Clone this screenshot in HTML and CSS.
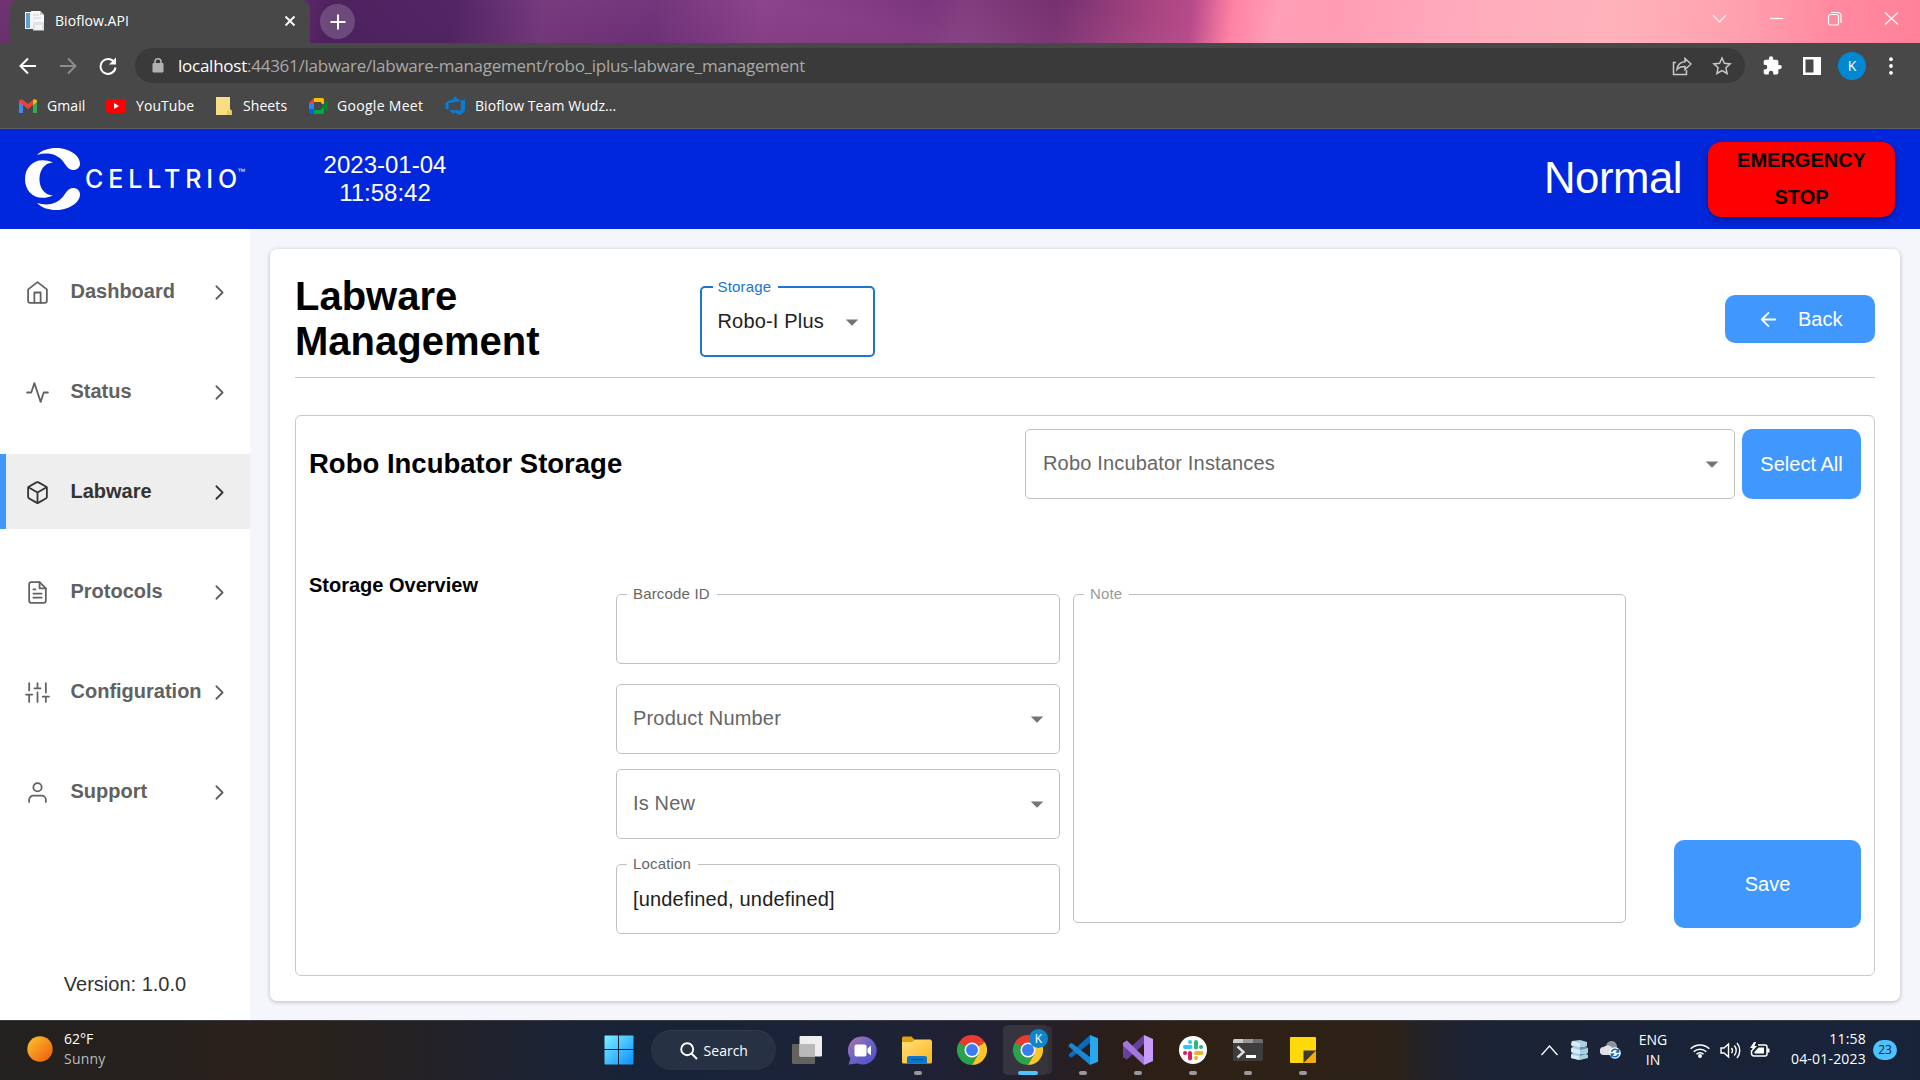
FILE: index.html
```html
<!DOCTYPE html>
<html lang="en">
<head>
<meta charset="utf-8">
<title>Bioflow.API</title>
<link rel="stylesheet" href="styles.css">
</head>
<body>
<svg class="defs" width="0" height="0" aria-hidden="true">
  <defs>
    <linearGradient id="gWin" x1="0" y1="0" x2="1" y2="1"><stop offset="0" stop-color="#7df0ff"/><stop offset="1" stop-color="#0a8fff"/></linearGradient>
    <linearGradient id="gSun" x1="0" y1="0" x2="1" y2="1"><stop offset="0" stop-color="#fbc62f"/><stop offset="1" stop-color="#f0560c"/></linearGradient>
    <linearGradient id="gChat" x1="0" y1="0" x2="1" y2="1"><stop offset="0" stop-color="#b074a8"/><stop offset=".5" stop-color="#6a63c8"/><stop offset="1" stop-color="#4a4fc4"/></linearGradient>
    <linearGradient id="gFold" x1="0" y1="0" x2="1" y2="1"><stop offset="0" stop-color="#ffe07a"/><stop offset="1" stop-color="#ffb51c"/></linearGradient>
    <symbol id="chev" viewBox="0 0 24 24"><path d="M9 18l6-6-6-6"/></symbol>
    <symbol id="drop" viewBox="0 0 24 24"><path d="M7 10l5 5 5-5z"/></symbol>
    <symbol id="chrome" viewBox="0 0 30 30">
      <path d="M15 15L2 7.500A15 15 0 0 1 28 7.500z" fill="#ea3a2f"/>
      <path d="M2 7.500A15 15 0 0 0 15 30L21.500 18.700 15 15z" fill="#2ba24c"/>
      <path d="M28 7.500A15 15 0 0 1 15 30L21.500 18.700 21 7.500z" fill="#fdc52a"/>
      <path d="M15 7.500h13L15 15 8.500 18.700 2 7.500z" fill="#ea3a2f"/>
      <path d="M2 7.500L8.500 18.800 15 15z" fill="#2ba24c"/>
      <circle cx="15" cy="15" r="7.500" fill="#fff"/><circle cx="15" cy="15" r="6" fill="#3b7cf0"/>
    </symbol>
  </defs>
</svg>

<div class="tabstrip">
  <div class="tab">
    <svg class="favicon" width="20" height="20" viewBox="0 0 20 20"><path d="M0 1h12v17H0z" fill="#eef3f7"/><path d="M1 2h4v15H1z" fill="#5d9fcf"/><path d="M6 0h9l4 4v10H6z" fill="#f7f7f7"/><path d="M15 0v4h4z" fill="#c8ccd0"/><path d="M8 4h6M8 7h8" stroke="#cfd4d8"/><path d="M8 11h11v8.500H8z" fill="#dfe2e5"/><path d="M10 14h7v5h-7z" fill="#f4f4f4"/></svg>
    <span class="tab-title">Bioflow.API</span>
    <svg width="12" height="12" viewBox="0 0 12 12" stroke="#fff" stroke-width="1.800"><path d="M1.500 1.500l9 9M10.500 1.500l-9 9"/></svg>
  </div>
  <div class="newtab"><svg width="16" height="16" viewBox="0 0 16 16" stroke="#fff" stroke-width="2"><path d="M8 .500v15M.500 8h15"/></svg></div>
  <div class="winctl">
    <svg width="15" height="15" viewBox="0 0 15 15"><path d="M1 4l6.500 7L14 4" opacity=".8"/></svg>
    <svg width="15" height="15" viewBox="0 0 15 15"><path d="M1 7.500h13"/></svg>
    <svg width="15" height="15" viewBox="0 0 15 15"><rect x="1.500" y="3.500" width="10" height="10.500" rx="2"/><path d="M4 1.500h7a3 3 0 0 1 3 3V12"/></svg>
    <svg width="15" height="15" viewBox="0 0 15 15"><path d="M1 1.500l13 12M14 1.500l-13 12"/></svg>
  </div>
</div>

<div class="toolbar">
  <svg width="18" height="18" viewBox="0 0 18 18" class="ln w"><path d="M17 9H2M9 1.500L1.500 9 9 16.500"/></svg>
  <svg width="18" height="18" viewBox="0 0 18 18" class="ln g"><path d="M1 9h15M9 1.500L16.500 9 9 16.500"/></svg>
  <svg width="18" height="18" viewBox="0 0 18 18" class="ln w"><path d="M15.500 5.500A7.500 7.500 0 1 0 16.500 10.500"/><path d="M17 .500v7h-7z" fill="#fff" stroke="none"/></svg>
  <div class="omnibox">
    <svg width="12" height="15" viewBox="0 0 12 15"><rect x=".500" y="5" width="11" height="9.500" rx="1.200" fill="#b0b3b6"/><path d="M3 6V3.800a3 3 0 0 1 6 0V6" fill="none" stroke="#b0b3b6" stroke-width="1.600"/></svg>
    <div class="url"><b>localhost</b>:44361/labware/labware-management/robo_iplus-labware_management</div>
    <svg width="20" height="20" viewBox="0 0 20 20" class="thin"><path d="M4 6.500H1.500v12h13V14M5 13.500c.500-5 3.500-7.500 8-7.800V2.500L19 8l-6 5.500v-3c-3.500 0-6 .800-8 3z"/></svg>
    <svg width="20" height="20" viewBox="0 0 20 20" class="thin"><path d="M10 2l2.400 5.300 5.800.600-4.300 3.900 1.200 5.700L10 14.600l-5.100 2.900 1.200-5.700L1.800 7.900l5.800-.600z"/></svg>
  </div>
  <svg class="ext" width="24" height="24" viewBox="0 0 24 24"><path fill="#fff" d="M20.500 11H19V7c0-1.100-.9-2-2-2h-4V3.500a2.500 2.500 0 0 0-5 0V5H4c-1.100 0-2 .9-2 2v3.800h1.500a2.700 2.700 0 0 1 0 5.400H2V20c0 1.100.9 2 2 2h3.800v-1.500a2.700 2.700 0 0 1 5.400 0V22H17c1.100 0 2-.9 2-2v-4h1.500a2.500 2.500 0 0 0 0-5z" transform="translate(2 1.500) scale(.86)"/></svg>
  <svg class="side" width="18" height="18" viewBox="0 0 18 18"><path d="M0 0h18v18H0zM2.500 2.500v13h8v-13z" fill="#fff" fill-rule="evenodd"/></svg>
  <div class="avatar">K</div>
  <svg class="dots" width="4" height="18" viewBox="0 0 4 18" fill="#fff"><circle cx="2" cy="2.200" r="1.900"/><circle cx="2" cy="9" r="1.900"/><circle cx="2" cy="15.800" r="1.900"/></svg>
</div>

<div class="bookmarks">
  <div class="bm bm1"><svg width="18" height="14" viewBox="0 0 18 14"><path d="M0 2v12h4V5z" fill="#4285f4"/><path d="M18 2v12h-4V5z" fill="#34a853"/><path d="M0 2.500C0 .500 2.500-.500 4 1l5 4 5-4v5l-5 4-5-4-4-3z" fill="#ea4335"/><path d="M14 1c1.500-1.500 4-.500 4 1.500V3l-4 3z" fill="#fbbc04"/></svg><span>Gmail</span></div>
  <div class="bm bm2"><svg width="20" height="14" viewBox="0 0 20 14"><rect width="20" height="14" rx="3.500" fill="#f00"/><path d="M8 4v6l5-3z" fill="#fff"/></svg><span>YouTube</span></div>
  <div class="bm bm3"><svg width="16" height="18" viewBox="0 0 16 18"><path d="M0 0h14v12l2 2v4H0z" fill="#f8dd85"/><path d="M11 13l5 1v4h-5z" fill="#e9c865"/></svg><span>Sheets</span></div>
  <div class="bm bm4"><svg width="19" height="16" viewBox="0 0 19 16"><path d="M5 4h7v8H5z" fill="#484848"/><path d="M5 0h8.500Q15 0 15 1.500V7l-3-2V4H5z" fill="#fbbc04"/><path d="M5 0v5H0z" fill="#ea4335"/><path d="M0 5h5v7H0z" fill="#2684fc"/><path d="M0 11h5v5H1.500L0 14.500z" fill="#0066da"/><path d="M5 12h7v-1l3-2v5.500Q15 16 13.500 16H5z" fill="#00ac47"/><path d="M12 8l6-5.200q1-.500 1 .500v9.400q0 1-1 .500z" fill="#00832d"/></svg><span>Google Meet</span></div>
  <div class="bm bm5"><svg width="20" height="19" viewBox="0 0 20 19"><path d="M20 3.500v11.300L15.500 19l-7-2.700v2.600L4.300 13.700l11.500.900V4.800zM15.900 4.900L9 0v3L2.700 5 .5 7.500v5l3 1.300V7.200z" fill="#0b7bd8"/></svg><span>Bioflow Team Wudz...</span></div>
</div>

<header class="header">
  <div class="logo">
    <svg width="55" height="62" viewBox="25 148 55 62" fill="#fff"><path d="M37 155C42 150 49 148 56 148C69 148 80 155.500 80 163.500C80 167.500 77 170 73 170C68.500 170 66.500 166 63.500 162C57 153.500 47 152 37 155z"/><path d="M53 162.500C37 155.500 25 165 25 179C25 193 37 202.500 53 195.500C35 195 35 163 53 162.500z"/><path d="M37 203C42 208 49 210 56 210C69 210 80 202.500 80 194.500C80 190.500 77 188 73 188C68.500 188 66.500 192 63.500 196C57 204.500 47 206 37 203z"/></svg>
    <div class="brand">CELLTRI<span>O</span></div><span class="tm">™</span>
  </div>
  <div class="clock">2023-01-04<br>11:58:42</div>
  <div class="mode">Normal</div>
  <div class="estop">EMERGENCY<br>STOP</div>
</header>

<div class="app">
  <nav class="sidebar">
    <a class="nav"><svg class="ni" viewBox="0 0 24 24"><path d="M3 9l9-7 9 7v11a2 2 0 0 1-2 2H5a2 2 0 0 1-2-2z"/><path d="M9 22V12h6v10"/></svg><span>Dashboard</span><svg class="ch"><use href="#chev"/></svg></a>
    <a class="nav"><svg class="ni" viewBox="0 0 24 24"><path d="M22 12h-4l-3 9L9 3l-3 9H2"/></svg><span>Status</span><svg class="ch"><use href="#chev"/></svg></a>
    <a class="nav active"><svg class="ni" viewBox="0 0 24 24"><path d="M21 16V8a2 2 0 0 0-1-1.730l-7-4a2 2 0 0 0-2 0l-7 4A2 2 0 0 0 3 8v8a2 2 0 0 0 1 1.730l7 4a2 2 0 0 0 2 0l7-4A2 2 0 0 0 21 16z"/><path d="M3.270 6.960L12 12.010l8.730-5.050M12 22.080V12"/></svg><span>Labware</span><svg class="ch"><use href="#chev"/></svg></a>
    <a class="nav"><svg class="ni" viewBox="0 0 24 24"><path d="M14 2H6a2 2 0 0 0-2 2v16a2 2 0 0 0 2 2h12a2 2 0 0 0 2-2V8z"/><path d="M14 2v6h6M16 13H8M16 17H8M10 9H8"/></svg><span>Protocols</span><svg class="ch"><use href="#chev"/></svg></a>
    <a class="nav"><svg class="ni" viewBox="0 0 24 24"><path d="M4 21v-7M4 10V3M12 21v-9M12 8V3M20 21v-5M20 12V3M1 14h6M9 8h6M17 16h6"/></svg><span>Configuration</span><svg class="ch"><use href="#chev"/></svg></a>
    <a class="nav"><svg class="ni" viewBox="0 0 24 24"><path d="M20 21v-2a4 4 0 0 0-4-4H8a4 4 0 0 0-4 4v2"/><circle cx="12" cy="7" r="4"/></svg><span>Support</span><svg class="ch"><use href="#chev"/></svg></a>
    <div class="version">Version: 1.0.0</div>
  </nav>

  <main class="card">
    <div class="card-head">
      <h1>Labware Management</h1>
      <div class="field focus"><label>Storage</label><span>Robo-I Plus</span><svg class="dd"><use href="#drop"/></svg></div>
      <button class="btn back"><svg width="23" height="23" viewBox="0 0 24 24"><path d="M19 12H5M12 19l-7-7 7-7"/></svg>Back</button>
    </div>
    <section class="panel">
      <div class="row-top">
        <h2>Robo Incubator Storage</h2>
        <div class="field ph instances"><span>Robo Incubator Instances</span><svg class="dd"><use href="#drop"/></svg></div>
        <button class="btn all">Select All</button>
      </div>
      <div class="row-form">
        <h3>Storage Overview</h3>
        <div class="fields">
          <div class="field f1"><label>Barcode ID</label></div>
          <div class="field ph f2"><span>Product Number</span><svg class="dd"><use href="#drop"/></svg></div>
          <div class="field ph f3"><span>Is New</span><svg class="dd"><use href="#drop"/></svg></div>
          <div class="field f4"><label>Location</label><span>[undefined, undefined]</span></div>
        </div>
        <div class="field note"><label>Note</label></div>
        <button class="btn save">Save</button>
      </div>
    </section>
  </main>
</div>

<footer class="taskbar">
  <div class="weather">
    <svg width="26" height="26" viewBox="0 0 26 26"><circle cx="13" cy="13" r="12.700" fill="url(#gSun)"/></svg>
    <div><div class="deg">62°F</div><div class="sky">Sunny</div></div>
  </div>
  <div class="dock">
    <div class="slot"><svg width="30" height="30" viewBox="0 0 30 30" fill="url(#gWin)"><path d="M1 .500h13v13.500H.500V1zM15 .500h14l.500.500v13H15zM.500 15H14v14.500H1L.500 29zM15 15h14.500v14l-.500.500H15z"/></svg></div>
    <div class="search"><svg width="18" height="18" viewBox="0 0 18 18" fill="none" stroke="#fff" stroke-width="1.900"><circle cx="7.200" cy="7.200" r="6"/><path d="M11.500 11.500l5.500 5.500"/></svg>Search</div>
    <div class="slot"><svg width="30" height="28" viewBox="0 0 30 28"><rect y="8" width="23" height="20" rx="1" fill="#63625f"/><rect x="7.500" width="22.500" height="20.500" rx="1" fill="#eee"/><path d="M7.500 8H23v12.500H7.500z" fill="#b9b9b9"/></svg></div>
    <div class="slot"><svg width="29" height="29" viewBox="0 0 29 29"><path d="M14.500.500a14 14 0 1 1-5 27L.500 28.500l2-6A14 14 0 0 1 14.500.500z" fill="url(#gChat)"/><rect x="6.500" y="8.500" width="12" height="12" rx="2" fill="#fff"/><path d="M19.500 12.500l3.500-3v10l-3.500-3z" fill="#fff"/></svg></div>
    <div class="slot"><svg width="30" height="28" viewBox="0 0 30 28"><path d="M0 2a1.500 1.500 0 0 1 1.500-1.500h8L13 4v4H0z" fill="#e3a008"/><path d="M0 6h10l3-2.500h15.500L30 5v21a1.500 1.500 0 0 1-1.500 1.500h-27A1.500 1.500 0 0 1 0 26z" fill="url(#gFold)"/><path d="M5 27.500V22a2 2 0 0 1 2-2h16a2 2 0 0 1 2 2v5.500z" fill="#0d77c9"/><path d="M9 23.500h12" stroke="#0a4d8c" stroke-width="1.200"/></svg><i></i></div>
    <div class="slot"><svg width="30" height="30"><use href="#chrome"/></svg></div>
    <div class="slot on"><div class="hl"></div><svg width="30" height="30"><use href="#chrome"/></svg><em>K</em><i></i></div>
    <div class="slot"><svg width="30" height="30" viewBox="0 0 30 30"><path d="M.700 19.500L22 0v8L4 22.300 2.500 22.300.700 20.800z" fill="#0a6cb8"/><path d="M.700 10.500L2.500 8.300H4L22 22v8L.700 11.500z" fill="#1a86d4"/><path d="M22 0l8 3.200v23.600L22 30z" fill="#28a8ee"/></svg><i></i></div>
    <div class="slot"><svg width="30" height="30" viewBox="0 0 30 30"><path d="M0 8l4-2.500v19L0 22z" fill="#6b46a0"/><path d="M0 22V19L21 0v9L4 24.500z" fill="#64429c"/><path d="M0 8l4-2.500L21 22v8L0 10.500z" fill="#a276dc"/><path d="M21 0l9 4v22l-9 4z" fill="#c99bfb"/></svg><i></i></div>
    <div class="slot"><svg width="28" height="28" viewBox="0 0 28 28"><circle cx="14" cy="14" r="14" fill="#fff"/><g stroke-width="4" stroke-linecap="round"><path d="M11 6h.1M6 11h5.500" stroke="#36c5f0"/><path d="M17 6v5.500M22 11h.1" stroke="#2eb67d"/><path d="M17 17h5.500M17 22h.1" stroke="#ecb22e"/><path d="M11 17v5.500M6 17h.1" stroke="#e01e5a"/></g></svg><i></i></div>
    <div class="slot"><svg width="30" height="22" viewBox="0 0 30 22"><rect width="30" height="22" rx="1.500" fill="#3d3d3d"/><path d="M0 1.500Q0 0 1.500 0H10v4H0z" fill="#ccc"/><path d="M10 0h10v4H10z" fill="#999"/><path d="M20 0h8.500Q30 0 30 1.500V4H20z" fill="#6d6d6d"/><path d="M4.500 7.500l6 5.500-6 5.500" fill="none" stroke="#ddd" stroke-width="2.400"/><path d="M13 17.500h10" stroke="#fff" stroke-width="3"/></svg><i></i></div>
    <div class="slot"><svg width="26" height="26" viewBox="0 0 26 26"><path d="M0 1Q0 0 1 0h24q1 0 1 1v12L13 26H1q-1 0-1-1z" fill="#ffd90a"/><path d="M26 13v12q0 1-1 1H13z" fill="#f5ad12"/><path d="M13.500 26V13.500H26z" fill="#3a3a3a"/></svg><i></i></div>
  </div>
  <div class="tray">
    <svg class="t1" width="17" height="11" viewBox="0 0 17 11" fill="none" stroke="#fff" stroke-width="1.300"><path d="M.500 10l8-9 8 9"/></svg>
    <svg class="t2" width="19" height="20" viewBox="0 0 19 20"><path d="M2 1l8-1 7 2v4l-2 1 3 1v5l-2 1 2 1v3l-8 2-9-2v-4l2-1-2-1V8l2-1-2-2z" fill="#a9cfe2"/><path d="M2 1l8 2v4L1 5zM2 8l8 2v4l-9-2zM1 15l8 1v4l-8-2z" fill="#d9edf6"/><path d="M10 7l5 0 3 1-8 2zM10 14l6 0-6 2z" fill="#5f93b0"/></svg>
    <svg class="t3" width="21" height="18" viewBox="0 0 21 18"><path d="M6 5a5.500 5.500 0 0 1 11 1v4H6z" fill="#8f949c"/><path d="M4 14a4 4 0 0 1-.500-8A6 6 0 0 1 13 8v6z" fill="#dfe1e4"/><circle cx="15" cy="12" r="5.800" fill="#fff"/><path d="M11.500 11a3.700 3.700 0 0 1 7-.500M18.500 13a3.700 3.700 0 0 1-7 .500M18.700 8v3h-3M11.300 16v-3h3" fill="none" stroke="#0b67c2" stroke-width="1.400"/></svg>
    <div class="lang">ENG<br>IN</div>
    <svg class="t4" width="20" height="15" viewBox="0 0 20 15" fill="none" stroke="#fff" stroke-width="1.500"><path d="M.700 5.800a13 13 0 0 1 18.600 0M3.700 8.700a9 9 0 0 1 12.600 0M6.500 11.300a5 5 0 0 1 7 0"/><circle cx="10" cy="13" r="1.200" fill="#fff"/></svg>
    <svg class="t5" width="21" height="17" viewBox="0 0 21 17" fill="none" stroke="#fff" stroke-width="1.400"><path d="M1 6h3l4.500-4v13L4 11H1zM11.500 6a4 4 0 0 1 0 5M14.300 3.500a7.500 7.500 0 0 1 0 10M17 1a11.500 11.500 0 0 1 0 15"/></svg>
    <svg class="t6" width="20" height="16" viewBox="0 0 20 16"><path d="M8 3h7a2 2 0 0 1 2 2v7a2 2 0 0 1-2 2H4a2.500 2.500 0 0 1-2.500-2V8" fill="none" stroke="#fff" stroke-width="1.500"/><path d="M17 6.500h2.500v4H17z" fill="#fff"/><path d="M8.500 5.500H14v6H4.500V10z" fill="#fff"/><path d="M4 0L0 6h2.500L1.500 10 7 4H4.500L6 0z" fill="#fff"/></svg>
    <div class="when">11:58<br>04-01-2023</div>
    <div class="count">23</div>
  </div>
</footer>
</body>
</html>
```

FILE: styles.css
```css
* { box-sizing: border-box; }
body {
  margin: 0;
  width: 1920px;
  height: 1080px;
  overflow: hidden;
  display: flex;
  flex-direction: column;
  font-family: "Liberation Sans", Arial, sans-serif;
  font-size: 20px;
  background: #f5f6fb;
}
.defs { position: absolute; }
svg { flex: none; display: block; }

/* Browser chrome */
.tabstrip, .toolbar, .bookmarks, .taskbar { font-family: "Open Sans", "Noto Sans", sans-serif; }
.tabstrip {
  height: 43px;
  flex: none;
  display: flex;
  padding-left: 9px;
  background:
    linear-gradient(12deg, rgba(60, 20, 80, .25), transparent 30%, rgba(255, 180, 220, .08) 45%, transparent 60%),
    linear-gradient(97deg, #7a3a78 0, #6c2f70 280px, #4f2260 330px, #522564 450px, #74387b 540px, #6c2f76 650px, #823b84 760px, #77317a 920px, #7d3a7c 960px, #763070 1050px, #a5447f 1140px, #b84b8a 1185px, #ff82a4 1225px, #ff9fb7 1270px, #ff9db4 1330px, #ffaabd 1450px, #ffb3bb 1600px, #ffa0ae 1730px, #ff8aa0 1820px, #ff8098 1920px);
}
.tab {
  width: 301px;
  background: #484848;
  border-radius: 9px 9px 0 0;
  display: flex;
  align-items: center;
  padding: 0 14px 2px 16px;
  color: #fff;
  font-size: 14px;
}
.favicon { margin-right: 10px; }
.tab-title { flex: 1; letter-spacing: .05px; }
.newtab {
  width: 35px;
  height: 35px;
  margin: 4px 0 0 10px;
  border-radius: 50%;
  background: rgba(255, 255, 255, .18);
  display: flex;
  align-items: center;
  justify-content: center;
}
.winctl {
  margin-left: auto;
  display: flex;
  gap: 42.300px;
  padding: 11px 21px 0 0;
  fill: none;
  stroke: #fff;
  stroke-width: 1.200;
}
.toolbar {
  height: 45px;
  flex: none;
  background: #484848;
  display: flex;
  align-items: center;
  padding: 0 22px 0 19px;
}
.ln { fill: none; stroke-width: 2; margin-right: 22px; }
.w { stroke: #fff; }
.g { stroke: #8c8c8c; }
.omnibox {
  width: 1610px;
  height: 35px;
  margin-left: -4px;
  border-radius: 18px;
  background: #3a3a3a;
  display: flex;
  align-items: center;
  gap: 20px;
  padding: 0 13px 0 17px;
}
.url { flex: 1; margin-left: -6px; font-size: 17px; letter-spacing: -.25px; color: #a9a9a9; white-space: nowrap; padding-bottom: 1px; }
.url b { color: #fff; font-weight: 400; }
.thin { fill: none; stroke: #c8c8c8; stroke-width: 1.500; }
.ext { margin-left: 15px; }
.side { margin-left: 19px; }
.avatar {
  width: 28px;
  height: 28px;
  margin: 0 23px 0 17px;
  border-radius: 50%;
  background: #0288d1;
  color: #fff;
  font-size: 14px;
  line-height: 28px;
  text-align: center;
}
.bookmarks {
  height: 41px;
  flex: none;
  background: #484848;
  border-bottom: 1px solid #5f5f5f;
  display: flex;
  padding: 0 0 5px 19px;
  color: #fff;
  font-size: 14px;
}
.bm { display: flex; align-items: center; white-space: nowrap; letter-spacing: .08px; }
.bm1 { width: 87px; gap: 10px; }
.bm2 { width: 110px; gap: 10px; }
.bm3 { width: 93px; gap: 11px; }
.bm4 { width: 136px; gap: 9px; letter-spacing: .3px; }
.bm5 { gap: 10px; }

/* Application header */
.header {
  height: 100px;
  flex: none;
  background: #0027dc;
  color: #fff;
  display: flex;
  align-items: center;
  padding: 0 25px;
}
.logo { width: 255px; display: flex; align-items: center; }
.brand {
  font-family: Inter, "Noto Sans", sans-serif;
  font-size: 25px;
  font-weight: 500;
  line-height: 25px;
  letter-spacing: 4.900px;
  margin-left: 5px;
}
.brand span { letter-spacing: 0; }
.tm { font-size: 8px; margin-top: -16px; }
.clock { width: 210px; text-align: center; font-size: 24px; line-height: 28px; }
.mode { margin-left: auto; font-size: 43.750px; letter-spacing: -.5px; line-height: 50px; padding-bottom: 2px; }
.estop {
  width: 187px;
  height: 75px;
  margin: 1px 0 0 26px;
  border-radius: 13px;
  background: #f00;
  color: #000;
  font-weight: 700;
  line-height: 36.500px;
  text-align: center;
  box-shadow: 0 3px 6px rgba(0, 0, 0, .3);
}

.app { flex: 1; display: flex; min-height: 0; }
.sidebar {
  width: 250px;
  flex: none;
  background: #fff;
  padding-top: 25px;
  display: flex;
  flex-direction: column;
  gap: 25px;
}
.nav {
  height: 75px;
  flex: none;
  display: flex;
  align-items: center;
  padding: 1px 18px 0 19px;
  border-left: 6px solid transparent;
  color: #616161;
  font-weight: 700;
}
.nav span { flex: 1; margin-left: 20.500px; padding-bottom: 1px; }
.ni, .ch { width: 25px; height: 25px; fill: none; stroke: currentColor; stroke-width: 1.700; stroke-linecap: round; stroke-linejoin: round; }
.nav.active { background: #eee; border-left-color: #4098ff; color: #333; }
.version { margin: auto 0 24px; text-align: center; color: #333; }

/* Main card */
.card {
  width: 1630px;
  height: 752px;
  margin: 20px 0 0 20px;
  padding: 27px 25px 25px;
  background: #fff;
  border-radius: 7px;
  box-shadow: 0 1px 4px rgba(0, 0, 0, .25);
}
.card-head { height: 102px; border-bottom: 1px solid #c9c9c9; display: flex; }
h1, h2, h3 { margin: 0; color: #000; }
h1 { width: 405px; padding-right: 130px; font-size: 40px; line-height: 45px; margin-top: -2px; }
.field {
  position: relative;
  height: 70px;
  border: 1px solid #c0c0c0;
  border-radius: 5px;
  display: flex;
  align-items: center;
  justify-content: space-between;
  padding: 0 7px 0 16px;
  color: #212121;
  letter-spacing: .17px;
}
.field span { padding-bottom: 1px; }
.ph { color: #666; }
.field label {
  position: absolute;
  top: -10px;
  left: 10px;
  padding: 0 7px 0 6px;
  background: #fff;
  font-size: 15px;
  line-height: 18px;
  color: #666;
}
.instances { width: 710px; padding-left: 17px; }
.dd { width: 30px; height: 30px; fill: #757575; }
.focus { width: 175px; height: 71px; margin-top: 10px; border: 2px solid #1976d2; padding: 0 6px 0 15.500px; }
.focus label { color: #1976d2; top: -10px; left: 11px; padding: 0 7px 0 4.500px; }
.focus span { padding-bottom: 0; }
.f4 span { padding-bottom: 0; padding-top: 1px; }
.btn {
  border: 0;
  border-radius: 10px;
  background: #4098ff;
  color: #fff;
  font: 20px "Liberation Sans", Arial, sans-serif;
  padding: 0;
}
.back { width: 150px; height: 48px; margin: 19px 0 0 auto; display: flex; align-items: center; padding: 1px 0 0 32px; gap: 18px; }
.back svg { fill: none; stroke: #fff; stroke-width: 1.900; stroke-linecap: round; stroke-linejoin: round; }
.panel { margin-top: 37px; height: 561px; border: 1px solid #c9c9c9; border-radius: 6px; padding: 13px; }
.row-top { height: 70px; display: flex; }
h2 { width: 716px; font-size: 27.500px; line-height: 69px; }
.all { width: 119px; margin-left: 7px; }
.row-form { display: flex; margin-top: 95px; }
h3 { width: 307px; font-size: 20px; line-height: 24px; margin-top: -21px; }
.fields { width: 444px; }
.f2 { margin-top: 20px; }
.f3 { margin-top: 15px; }
.f4 { margin-top: 25px; }
.note { width: 553px; height: 329px; margin-left: 13px; }
.note label { color: #999; }
.save { width: 187px; height: 88px; margin: 246px 0 0 48px; }

/* Taskbar */
.taskbar {
  height: 60px;
  flex: none;
  display: flex;
  color: #fff;
  font-size: 14px;
  border-top: 1px solid #3a3c42;
  background: linear-gradient(90deg, #23211f 0, #24201e 150px, #2b201c 230px, #28221c 320px, #232126 430px, #1b2335 560px, #182338 650px, #1b2338 800px, #202132 990px, #2a1e1b 1110px, #2e2014 1180px, #2d2216 1390px, #22222a 1430px, #1b2336 1480px, #18233a 1920px);
}
.weather { width: 591.500px; display: flex; align-items: center; padding: 0 0 3px 27px; gap: 11px; line-height: 20px; }
.sky { color: #bdbdbd; letter-spacing: .2px; }
.dock { display: flex; flex: none; }
.slot { position: relative; width: 55.100px; height: 58px; display: flex; align-items: center; justify-content: center; }
.slot svg { position: relative; }
.slot i { position: absolute; left: 24px; bottom: 4px; width: 8px; height: 4px; border-radius: 2px; background: #99999b; }
.slot.on i { left: 18px; width: 20px; background: #4cc2ff; }
.hl { position: absolute; left: 3px; top: 4px; width: 45px; height: 50px; border-radius: 5px; background: rgba(255, 255, 255, .09); box-shadow: 5px 0 0 -1px rgba(255, 255, 255, .07); }
.slot em {
  position: absolute;
  left: 29px;
  top: 8px;
  width: 19px;
  height: 19px;
  border-radius: 50%;
  background: #0f86cc;
  font: 12px/19px "Open Sans", sans-serif;
  text-align: center;
}
.search {
  width: 125px;
  height: 40px;
  margin: 9px 4px 0;
  border-radius: 20px;
  background: #273144;
  border-top: 1px solid #343d50;
  display: flex;
  align-items: center;
  gap: 6px;
  padding-left: 29px;
}
.tray { margin-left: auto; display: flex; align-items: center; padding: 0 23px 1px 0; }
.t2 { margin-left: 12px; }
.t3 { margin-left: 11px; }
.lang { width: 40px; margin-left: 12px; text-align: center; line-height: 20px; }
.t4 { margin-left: 17px; }
.t5 { margin-left: 10px; }
.t6 { margin-left: 9px; }
.when { width: 96px; text-align: right; line-height: 20px; padding-bottom: 2px; letter-spacing: .2px; }
.count { width: 24px; height: 20px; margin-left: 7px; border-radius: 10px; background: #4cc2ff; color: #10202c; font-size: 12px; line-height: 20px; text-align: center; }
```
